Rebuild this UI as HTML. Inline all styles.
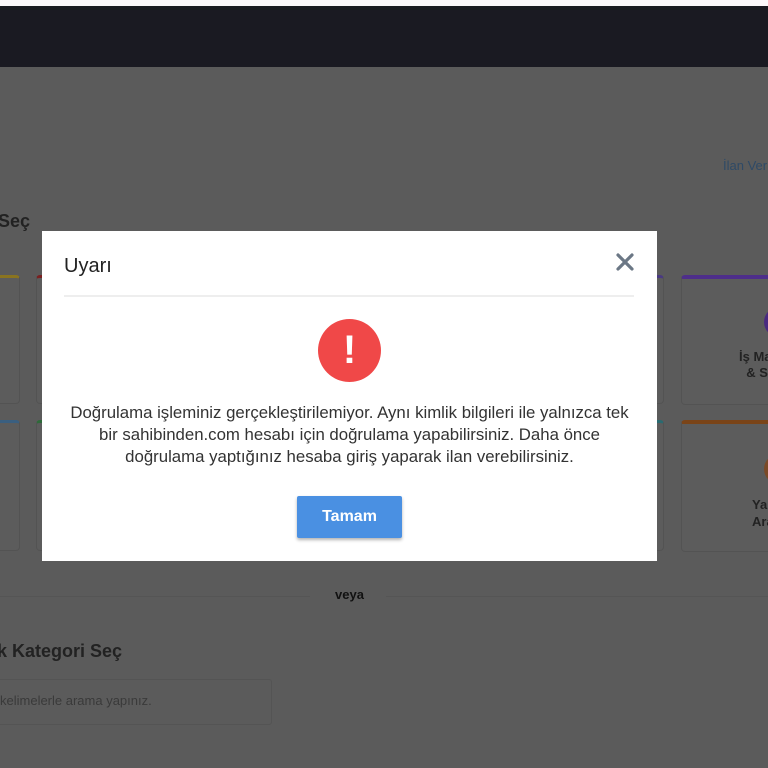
<!DOCTYPE html>
<html><head><meta charset="utf-8"><style>
body{margin:0;width:768px;height:768px;overflow:hidden;background:#5b5b5b;font-family:"Liberation Sans",sans-serif;position:relative}
.a{position:absolute}
.card{position:absolute;border:1px solid #535353;border-radius:4px;background:#5c5c5c}
</style></head><body>
<div class="a" style="left:0;top:0;width:768px;height:6px;background:#fcf8fc"></div>
<div class="a" style="left:0;top:6px;width:768px;height:61px;background:#1a1a22"></div>
<div class="a" style="left:723px;top:158px;color:#2f4a66;font-size:13px">İlan Ver</div>
<div class="a" style="left:-2px;top:211px;color:#222;font-size:18px;font-weight:bold">Seç</div>
<div class="card" style="left:-5px;top:275px;width:23px;height:125px;border-top:3px solid #8a7420"></div>
<div class="card" style="left:-5px;top:420px;width:23px;height:127px;border-top:3px solid #3a5f80"></div>
<div class="card" style="left:36px;top:275px;width:20px;height:125px;border-top:3px solid #7a2020"></div>
<div class="card" style="left:36px;top:420px;width:20px;height:127px;border-top:3px solid #2e6a3a"></div>
<div class="card" style="left:640px;top:275px;width:22px;height:125px;border-top:3px solid #4a3a80"></div>
<div class="card" style="left:640px;top:420px;width:22px;height:127px;border-top:3px solid #2a6a70"></div>
<div class="card" style="left:681px;top:275px;width:100px;height:125px;border-top:4px solid #4e2e8a">
<div class="a" style="left:82px;top:28px;width:30px;height:30px;border-radius:50%;background:#4a2a80"></div>
<div class="a" style="left:57px;top:70px;font-size:13px;color:#222;font-weight:bold;line-height:16px">İş Ma<br>&nbsp;&nbsp;&amp; S</div></div>
<div class="card" style="left:681px;top:420px;width:100px;height:127px;border-top:4px solid #7a4418">
<div class="a" style="left:82px;top:30px;width:30px;height:30px;border-radius:50%;background:#7a4a28"></div>
<div class="a" style="left:70px;top:72px;font-size:13px;color:#222;font-weight:bold;line-height:17px">Ya<br>Ara</div></div>
<div class="a" style="left:0;top:596px;width:310px;height:1px;background:#555"></div>
<div class="a" style="left:386px;top:596px;width:382px;height:1px;background:#555"></div>
<div class="a" style="left:335px;top:587px;font-size:13px;font-weight:bold;color:#111">veya</div>
<div class="a" style="left:-3px;top:641px;font-size:18px;font-weight:bold;color:#222">k Kategori Seç</div>
<div class="a" style="left:-5px;top:679px;width:275px;height:44px;border:1px solid #545454;border-radius:3px"></div>
<div class="a" style="left:0;top:693px;font-size:13px;color:#3a3a3a">kelimelerle arama yapınız.</div>

<div class="a" style="left:42px;top:231px;width:615px;height:330px;background:#fff">
<div class="a" style="left:22px;top:24px;font-size:20px;color:#222">Uyarı</div>
<svg class="a" style="left:574px;top:22px" width="18" height="18" viewBox="0 0 18 18"><path d="M2 2L16 16M16 2L2 16" stroke="#6b7785" stroke-width="3.2" stroke-linecap="round"/></svg>
<div class="a" style="left:22px;top:64px;width:570px;height:2px;background:#eee"></div>
<div class="a" style="left:276px;top:88px;width:63px;height:63px;border-radius:50%;background:#f04848;color:#fff;font-size:40px;font-weight:bold;text-align:center;line-height:63px">!</div>
<div class="a" style="left:0;top:171px;width:615px;text-align:center;font-size:16.8px;line-height:22px;color:#333">Doğrulama işleminiz gerçekleştirilemiyor. Aynı kimlik bilgileri ile yalnızca tek<br>bir sahibinden.com hesabı için doğrulama yapabilirsiniz. Daha önce<br>doğrulama yaptığınız hesaba giriş yaparak ilan verebilirsiniz.</div>
<div class="a" style="left:255px;top:265px;width:105px;height:42px;background:#4a90e2;border-radius:2px;box-shadow:0 2px 3px rgba(0,0,0,.3);color:#fff;font-weight:bold;font-size:16px;text-align:center;line-height:42px">Tamam</div>
</div>
</body></html>
